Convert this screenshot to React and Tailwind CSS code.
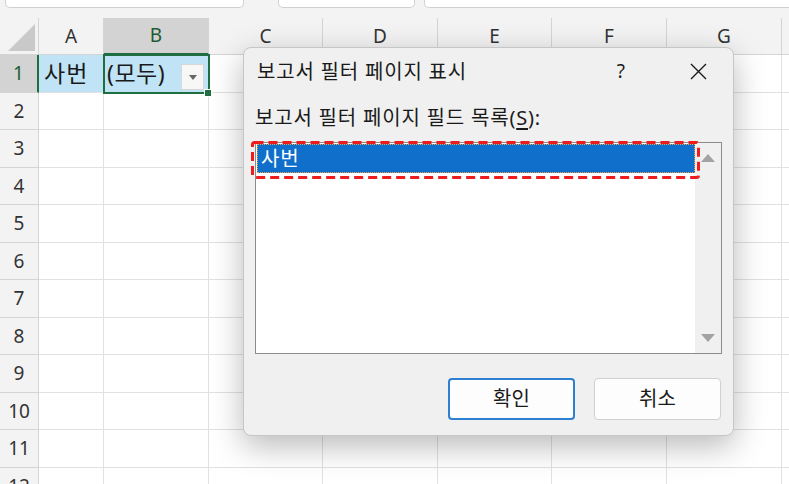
import React from "react";

const cols = [
  { id: "A", w: "w-[65px]" },
  { id: "B", w: "w-[105px]" },
  { id: "C", w: "w-[114px]" },
  { id: "D", w: "w-[115px]" },
  { id: "E", w: "w-[114px]" },
  { id: "F", w: "w-[115px]" },
  { id: "G", w: "w-[115px]" },
  { id: "", w: "w-[60px]" },
];

const rowHeights = ["h-[38px]", "h-[37px]", "h-[38px]", "h-[37px]", "h-[38px]", "h-[37px]", "h-[38px]", "h-[37px]", "h-[38px]", "h-[37px]", "h-[38px]", "h-[37px]"];

const font = "font-['Noto_Sans','Noto_Sans_CJK_KR',sans-serif]";

const Cell = ({ row, col }) => {
  if (row === 1 && col === "A") {
    return (
      <div className="h-full bg-[#c0e4f5] flex items-center pl-[5px] text-[23px] tracking-[1px] text-[#1a1a1a]">사번</div>
    );
  }
  if (row === 1 && col === "B") {
    return (
      <div className="relative h-full bg-[#c0e4f5] flex items-center pl-[3px] text-[23px] tracking-[0.5px] text-[#1a1a1a]">
        (모두)
        <div className="absolute right-[4px] top-[9px] w-[23px] h-[26px] bg-[#f7f7f7] border border-[#d8d8d8] flex items-center justify-center">
          <svg width="8" height="5" viewBox="0 0 8 5">
            <path d="M0 0h8L4 5z" fill="#666" />
          </svg>
        </div>
      </div>
    );
  }
  return null;
};

const Sheet = () => (
  <div className="flex flex-col">
    <div className="flex h-[37px]">
      <div className="w-[39px] shrink-0 bg-[#f3f3f3] border-r border-b border-[#d4d4d4] relative">
        <svg className="absolute right-[3px] bottom-[3px]" width="27" height="27" viewBox="0 0 27 27">
          <path d="M27 0V27H0z" fill="#c9c9c9" />
        </svg>
      </div>
      {cols.map((c, i) => (
        <div
          key={i}
          className={`${c.w} shrink-0 flex items-center justify-center text-[19px] border-r border-[#d4d4d4] ${
            c.id === "B" ? "bg-[#d3d3d3] border-b-2 border-b-[#1e6e42] text-[#1d5c36]" : "bg-[#f3f3f3] border-b text-[#333]"
          }`}
        >
          {c.id}
        </div>
      ))}
    </div>
    {rowHeights.map((h, i) => {
      const row = i + 1;
      return (
        <div key={row} className={`flex ${h}`}>
          <div
            className={`w-[39px] shrink-0 flex items-center justify-center text-[19px] border-b border-r border-[#d4d4d4] ${
              row === 1 ? "bg-[#d3d3d3] text-[#1d5c36] border-r-2 border-r-[#1e6e42]" : "bg-[#f3f3f3] text-[#333]"
            }`}
          >
            {row}
          </div>
          {cols.map((c, j) => (
            <div key={j} className={`${c.w} shrink-0 border-r border-b border-[#e1e1e1] bg-white`}>
              <Cell row={row} col={c.id} />
            </div>
          ))}
        </div>
      );
    })}
  </div>
);

const Dialog = () => (
  <div className="absolute left-[243px] top-[47px] w-[491px] h-[389px] bg-[#f0f0f0] rounded-[8px] border border-[#c6c6c6] shadow-[0_10px_32px_rgba(0,0,0,0.28)] flex flex-col text-[#1a1a1a]">
    <div className="h-[47px] flex items-center pl-[13px] pr-[26px]">
      <span className="text-[20px] tracking-[0.8px]">보고서 필터 페이지 표시</span>
      <span className="ml-auto text-[19px] mr-[65px]">?</span>
      <svg width="17" height="17" viewBox="0 0 17 17">
        <path d="M1 1L16 16M16 1L1 16" stroke="#1a1a1a" strokeWidth="1.4" />
      </svg>
    </div>
    <div className="px-[11px] pt-[11px]">
      <div className="text-[20px] tracking-[0.8px] h-[36px] leading-[24px]">
        보고서 필터 페이지 필드 목록(<span className="underline underline-offset-[3px]">S</span>):
      </div>
      <div className="relative h-[212px] bg-white border border-[#8c8c8c] flex">
        <div className="flex-1 pl-[1px] pt-[1px]">
          <div className="h-[29px] bg-[#0f6fcb] border border-dotted border-[#f0a24a] flex items-center pl-[3px] text-white text-[20px] tracking-[0.8px]">
            사번
          </div>
        </div>
        <div className="w-[26px] bg-[#f0f0f0] flex flex-col items-center justify-between py-[11px]">
          <svg width="14" height="8" viewBox="0 0 14 8">
            <path d="M0 8L7 0L14 8z" fill="#a3a3a3" />
          </svg>
          <svg width="14" height="8" viewBox="0 0 14 8">
            <path d="M0 0H14L7 8z" fill="#a3a3a3" />
          </svg>
        </div>
        <svg className="absolute left-[-5px] top-[-2px]" width="449" height="38" viewBox="0 0 449 38">
          <rect x="1.5" y="1.5" width="446" height="35" rx="2" fill="none" stroke="#ee1c1c" strokeWidth="3" strokeDasharray="9 5" />
        </svg>
      </div>
    </div>
    <div className="flex justify-end gap-[19px] pr-[12px] pt-[24px]">
      <button className="w-[127px] h-[42px] rounded-[4px] bg-[#fdfdfd] border-2 border-[#2d7fd2] text-[20px]">확인</button>
      <button className="w-[127px] h-[42px] rounded-[4px] bg-[#fdfdfd] border border-[#d0d0d0] text-[20px]">취소</button>
    </div>
  </div>
);

export default function App() {
  return (
    <div className={`relative w-[789px] h-[484px] overflow-hidden bg-[#f3f3f3] ${font}`}>
      <div className="h-[18px] flex items-start">
        <div className="ml-[5px] w-[239px] h-[8px] bg-white border border-t-0 border-[#d0d0d0] rounded-b-[5px]" />
        <div className="ml-[34px] w-[137px] h-[8px] bg-white border border-t-0 border-[#d0d0d0] rounded-b-[5px]" />
        <div className="ml-[9px] flex-1 h-[8px] bg-white border border-t-0 border-r-0 border-[#d0d0d0] rounded-bl-[5px]" />
      </div>
      <Sheet />
      <div className="absolute left-[103px] top-[54px] w-[107px] h-[40px] border-2 border-[#1e6e42] pointer-events-none" />
      <div className="absolute left-[204px] top-[89px] w-[8px] h-[8px] bg-[#1e6e42] border border-white" />
      <Dialog />
    </div>
  );
}
